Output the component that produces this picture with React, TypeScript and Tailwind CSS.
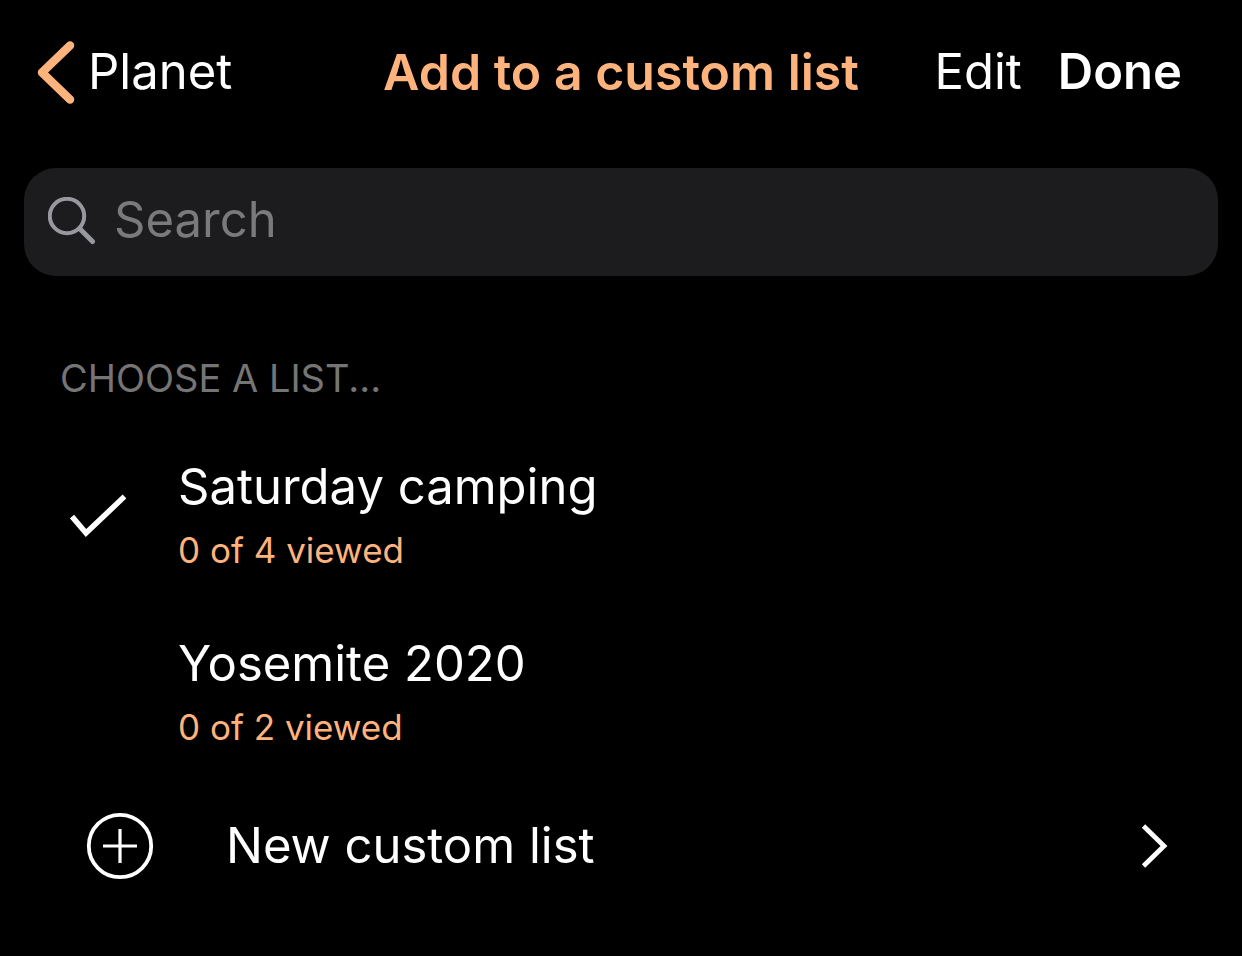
import React, { useState } from 'react';

interface CustomList {
  id: string;
  name: string;
  viewed: number;
  total: number;
}

const lists: CustomList[] = [
  { id: 'saturday-camping', name: 'Saturday camping', viewed: 0, total: 4 },
  { id: 'yosemite-2020', name: 'Yosemite 2020', viewed: 0, total: 2 }
];

const BackIcon: React.FC = () => (
  <svg className="w-10 h-16 shrink-0" viewBox="0 0 40 64" fill="none" aria-hidden="true">
    <path d="M34 5.5L6 32.5L34 59.5" stroke="currentColor" strokeWidth="8.5" strokeLinecap="round" strokeLinejoin="round" />
  </svg>
);

const SearchIcon: React.FC = () => (
  <svg className="w-12 h-12 shrink-0 text-[#98989f]" viewBox="0 0 48 48" fill="none" aria-hidden="true">
    <circle cx="19" cy="19" r="17.2" stroke="currentColor" strokeWidth="4" />
    <path d="M31.5 31.5L44.5 44.5" stroke="currentColor" strokeWidth="5" strokeLinecap="round" />
  </svg>
);

const CheckIcon: React.FC = () => (
  <svg className="w-14 h-11" viewBox="0 0 56 44" fill="none" aria-hidden="true">
    <path d="M2 22.5L16 39L54.5 2.5" stroke="currentColor" strokeWidth="5.5" />
  </svg>
);

const PlusCircleIcon: React.FC = () => (
  <svg className="w-17 h-17 shrink-0" viewBox="0 0 68 68" fill="none" aria-hidden="true">
    <circle cx="34" cy="34" r="31.2" stroke="currentColor" strokeWidth="3.8" />
    <path d="M34 17V51M17 34H51" stroke="currentColor" strokeWidth="3.2" />
  </svg>
);

const ChevronIcon: React.FC = () => (
  <svg className="w-7 h-11 shrink-0" viewBox="0 0 28 44" fill="none" aria-hidden="true">
    <path d="M3.5 2L24 22L3.5 42" stroke="currentColor" strokeWidth="4.8" />
  </svg>
);

interface ListRowProps {
  list: CustomList;
  selected: boolean;
  onSelect: () => void;
}

const ListRow: React.FC<ListRowProps> = ({ list, selected, onSelect }) => (
  <li>
    <button
      type="button"
      aria-pressed={selected}
      onClick={onSelect}
      className="flex w-full items-center pl-[70px] pr-6 h-[177px] text-left"
    >
      <span className="w-[108px] shrink-0 pb-0.5">{selected && <CheckIcon />}</span>
      <span className="flex flex-col">
        <span className="text-[49px] leading-[66px]">{list.name}</span>
        <span className="text-[35px] leading-[60px] text-[#ffb37c]">
          {list.viewed} of {list.total} viewed
        </span>
      </span>
    </button>
  </li>
);

export default function App() {
  const [query, setQuery] = useState('');
  const [selectedId, setSelectedId] = useState('saturday-camping');

  const visibleLists = lists.filter((l) => l.name.toLowerCase().includes(query.toLowerCase()));

  return (
    <div className="min-h-screen bg-black text-white font-['Inter',sans-serif]">
      {/* Navigation bar */}
      <header className="grid grid-cols-[1fr_auto_1fr] items-center pt-10 pb-16 px-9 text-[49px] leading-[64px] whitespace-nowrap">
        <a href="#planet" className="flex items-center gap-3">
          <span className="text-[#ffb37c]">
            <BackIcon />
          </span>
          Planet
        </a>
        <h1 className="text-[50px] font-semibold text-[#ffb37c]">Add to a custom list</h1>
        <div className="flex justify-end gap-9 pr-6">
          <button type="button">Edit</button>
          <button type="button" className="font-semibold">
            Done
          </button>
        </div>
      </header>

      {/* Search */}
      <label className="mx-6 flex h-[108px] items-center gap-[18px] rounded-[32px] bg-[#1c1c1e] px-6 pb-0.5">
        <SearchIcon />
        <input
          type="text"
          aria-label="Search"
          placeholder="Search"
          value={query}
          onChange={(e) => setQuery(e.target.value)}
          className="min-w-0 flex-1 bg-transparent pb-0.5 text-[49px] leading-[64px] placeholder-[#7a7a7a] focus:outline-none"
        />
      </label>

      <main className="pt-[72px]">
        <h2 className="px-[60px] text-[38px] leading-[60px] text-[#757575]">CHOOSE A LIST...</h2>
        <ul className="pt-5">
          {visibleLists.map((list) => (
            <ListRow
              key={list.id}
              list={list}
              selected={list.id === selectedId}
              onSelect={() => setSelectedId(list.id)}
            />
          ))}
        </ul>
        <button type="button" className="flex w-full items-center pl-[86px] pr-[74px] h-32 text-[49px] leading-[64px]">
          <PlusCircleIcon />
          <span className="flex-1 pl-[72px] text-left">New custom list</span>
          <ChevronIcon />
        </button>
      </main>
    </div>
  );
}
